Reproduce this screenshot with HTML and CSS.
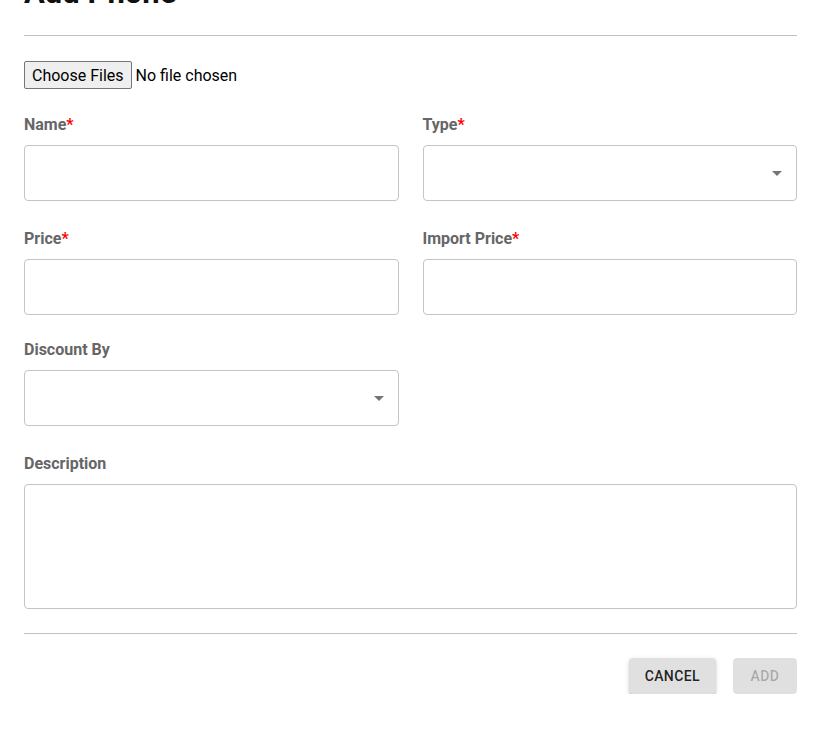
FILE: index.html
```html
<!DOCTYPE html>
<html lang="en">
<head>
<meta charset="utf-8">
<title>Add Phone</title>
<link rel="stylesheet" href="styles.css">
</head>
<body>
<div class="dialog">
  <h2 class="title">Add Phone</h2>
  <hr class="divider">
  <div class="file-row"><input type="file" multiple class="file"></div>
  <div class="grid">
    <div class="field">
      <label class="label">Name<span class="req">*</span></label>
      <div class="box"></div>
    </div>
    <div class="field">
      <label class="label">Type<span class="req">*</span></label>
      <div class="box select">
        <svg class="arrow" width="24" height="24" viewBox="0 0 24 24"><path d="M7 10l5 5 5-5z" fill="#757575"/></svg>
      </div>
    </div>
    <div class="field tight">
      <label class="label">Price<span class="req">*</span></label>
      <div class="box"></div>
    </div>
    <div class="field tight">
      <label class="label">Import Price<span class="req">*</span></label>
      <div class="box"></div>
    </div>
    <div class="field">
      <label class="label">Discount By</label>
      <div class="box select">
        <svg class="arrow" width="24" height="24" viewBox="0 0 24 24"><path d="M7 10l5 5 5-5z" fill="#757575"/></svg>
      </div>
    </div>
    <div class="field"></div>
    <div class="field wide">
      <label class="label">Description</label>
      <div class="box area"></div>
    </div>
  </div>
  <hr class="divider bottom">
  <div class="actions">
    <button class="btn">Cancel</button>
    <button class="btn disabled" disabled>Add</button>
  </div>
</div>
</body>
</html>
```

FILE: styles.css
```css
html, body {
  margin: 0;
  padding: 0;
  background: #fff;
  font-family: Roboto, "Liberation Sans", sans-serif;
}
.dialog {
  padding: 0 16px 0 24px;
}
.title {
  margin: -27px 0 0 0;
  font-size: 31px;
  line-height: 40px;
  font-weight: 700;
  color: #111;
}
.divider {
  border: 0;
  border-top: 1px solid #c2c2c2;
  margin: 22px 0 0 0;
  height: 0;
}
.file-row {
  margin-top: 25px;
  height: 28px;
}
.file {
  display: block;
  font: 16px Roboto, sans-serif;
  color: #000;
}
.file::file-selector-button {
  font: 16px Roboto, sans-serif;
  height: 28px;
  padding: 0 7px;
  margin-right: 4px;
  border: 1px solid #767676;
  border-radius: 2px;
  background: #efefef;
  color: #000;
}
.grid {
  display: grid;
  grid-template-columns: 1fr 1fr;
  column-gap: 24px;
  margin-top: 23px;
}
.field {
  display: flex;
  flex-direction: column;
  margin-bottom: 25px;
}
.field.tight {
  margin-bottom: 22px;
}
.field.wide {
  grid-column: 1 / span 2;
  margin-bottom: 24px;
}
.label {
  font-size: 16px;
  line-height: 24px;
  font-weight: 700;
  color: #666;
  margin-top: 1px;
  margin-bottom: 8px;
}
.req {
  color: #f00;
}
.box {
  position: relative;
  height: 54px;
  border: 1px solid #c4c4c4;
  border-radius: 4px;
}
.box.area {
  height: 123px;
}
.arrow {
  position: absolute;
  right: 7px;
  top: 15px;
}
.bottom {
  margin-top: 0;
}
.actions {
  display: flex;
  justify-content: flex-end;
  gap: 17px;
  margin-top: 24px;
}
.btn {
  font-family: Roboto, sans-serif;
  font-size: 14px;
  font-weight: 500;
  letter-spacing: 0.4px;
  text-transform: uppercase;
  height: 36px;
  min-width: 64px;
  padding: 0 16px;
  border: 0;
  border-radius: 4px;
  background: #e0e0e0;
  color: rgba(0,0,0,0.87);
  box-shadow: 0 3px 1px -2px rgba(0,0,0,0.2), 0 2px 2px 0 rgba(0,0,0,0.14), 0 1px 5px 0 rgba(0,0,0,0.12);
}
.btn.disabled {
  color: rgba(0,0,0,0.26);
  background: rgba(0,0,0,0.12);
  box-shadow: none;
}
```
